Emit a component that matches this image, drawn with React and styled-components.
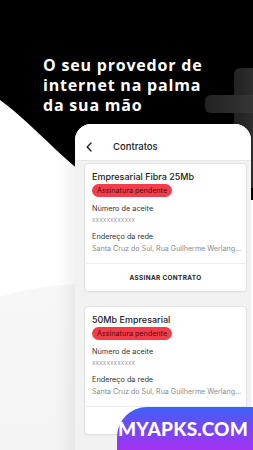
import React from "react";
import styled, { createGlobalStyle } from "styled-components";

const Global = createGlobalStyle`
  html, body { margin: 0; padding: 0; }
  body { width: 253px; height: 450px; overflow: hidden; background: #fff; }
  * { box-sizing: border-box; }
`;

const Screen = styled.div`
  position: relative;
  width: 253px;
  height: 450px;
  overflow: hidden;
  background: #ffffff;
`;

const Backdrop = styled.svg`
  position: absolute;
  inset: 0;
  width: 253px;
  height: 450px;
  z-index: 0;
`;

const Content = styled.div`
  position: relative;
  z-index: 1;
  display: flex;
  flex-direction: column;
`;

const Headline = styled.h1`
  margin: 0;
  padding: 55px 0 0 43px;
  font-family: "Open Sans", "DejaVu Sans", sans-serif;
  font-weight: 700;
  font-size: 16px;
  line-height: 20px;
  letter-spacing: 0.8px;
  color: #ffffff;
`;

const Phone = styled.div`
  margin: 9px 0 0 75px;
  width: 176px;
  height: 340px;
  border-radius: 16px 16px 0 0;
  background: #f2f2f2;
  overflow: hidden;
  box-shadow: -8px 6px 16px rgba(0, 0, 0, 0.06);
  font-family: Inter, "Liberation Sans", sans-serif;
`;

const PhoneHeader = styled.div`
  display: flex;
  align-items: center;
  height: 37px;
  padding: 9px 0 0 11px;
  background: #ffffff;
  border-bottom: 1px solid #e6e6e6;
`;

const BackIcon = styled.svg`
  width: 6px;
  height: 10px;
  flex: none;
`;

const HeaderTitle = styled.div`
  margin-left: 21px;
  font-size: 9.5px;
  font-weight: 500;
  color: #1c1c1c;
`;

const Body = styled.div`
  display: flex;
  flex-direction: column;
  gap: 14px;
  padding: 2px 4px 0 9px;
`;

const Card = styled.div`
  width: 163px;
  background: #ffffff;
  border: 1px solid #e3e3e3;
  border-radius: 4px;
  box-shadow: 0 1px 2px rgba(0, 0, 0, 0.04);
`;

const CardMain = styled.div`
  display: flex;
  flex-direction: column;
  align-items: flex-start;
  padding: 7px 7px 8px 7px;
`;

const Title = styled.div`
  font-size: 9px;
  line-height: 12px;
  font-weight: 500;
  color: #222;
`;

const Badge = styled.span`
  margin-top: 1px;
  height: 13px;
  padding: 0 5px;
  border-radius: 7px;
  background: #f23d4b;
  color: #5a0910;
  font-size: 7.2px;
  line-height: 13px;
`;

const Label = styled.div`
  margin-top: 6px;
  font-size: 7.3px;
  line-height: 12px;
  color: #333;
`;

const Value = styled.div`
  font-size: ${(p) => (p.$small ? "6.6px" : "7.1px")};
  line-height: ${(p) => (p.$small ? "10px" : "12px")};
  color: ${(p) => (p.$small ? "#a0a0a0" : "#8a8a8a")};
  white-space: nowrap;
`;

const Footer = styled.div`
  display: flex;
  align-items: center;
  justify-content: center;
  height: 28px;
  border-top: 1px solid #ececec;
  font-size: 6.4px;
  font-weight: 700;
  letter-spacing: 0.35px;
  color: #222;
`;

const Watermark = styled.div`
  position: absolute;
  z-index: 2;
  left: 117px;
  top: 407px;
  width: 136px;
  height: 43px;
  border-top-left-radius: 30px;
  background: linear-gradient(180deg, #3c62f7 0%, #7a45f2 55%, #a231f0 100%);
  display: flex;
  align-items: center;
  justify-content: flex-end;
  padding: 0 5px 0 0;
  font-family: Lato, "Open Sans", sans-serif;
  font-weight: 900;
  font-size: 19px;
  letter-spacing: 0.2px;
  color: #ffffff;
`;

const contracts = [
  { title: "Empresarial Fibra 25Mb" },
  { title: "50Mb Empresarial" },
];

function ContractCard({ title }) {
  return (
    <Card>
      <CardMain>
        <Title>{title}</Title>
        <Badge>Assinatura pendente</Badge>
        <Label>Número de aceite</Label>
        <Value $small>xxxxxxxxxxxx</Value>
        <Label>Endereço da rede</Label>
        <Value>Santa Cruz do Sul, Rua Guilherme Werlang...</Value>
      </CardMain>
      <Footer>ASSINAR CONTRATO</Footer>
    </Card>
  );
}

export default function App() {
  return (
    <>
      <Global />
      <Screen>
        <Backdrop viewBox="0 0 253 450">
          <defs>
            <linearGradient id="plus" x1="0" y1="0" x2="1" y2="0">
              <stop offset="0" stopColor="#222222" />
              <stop offset="1" stopColor="#3a3a3a" />
            </linearGradient>
            <linearGradient id="low" x1="0" y1="0" x2="0" y2="1">
              <stop offset="0" stopColor="#f7f7f7" />
              <stop offset="1" stopColor="#f4f4f4" />
            </linearGradient>
          </defs>
          <path d="M0,297 Q30,287 75,284 L75,450 L0,450 Z" fill="url(#low)" />
          <path d="M0,0 H253 V200 H120 C70,170 35,125 0,100 Z" fill="#000000" />
          <rect x="234" y="68" width="40" height="120" rx="6" fill="url(#plus)" />
          <rect x="205" y="95" width="60" height="18" rx="6" fill="url(#plus)" />
        </Backdrop>
        <Content>
          <Headline>
            O seu provedor de
            <br />
            internet na palma
            <br />
            da sua mão
          </Headline>
          <Phone>
            <PhoneHeader>
              <BackIcon viewBox="0 0 6 10">
                <path d="M5,1 L1.2,5 L5,9" fill="none" stroke="#1c1c1c" strokeWidth="1.3" strokeLinecap="round" strokeLinejoin="round" />
              </BackIcon>
              <HeaderTitle>Contratos</HeaderTitle>
            </PhoneHeader>
            <Body>
              {contracts.map((c) => (
                <ContractCard key={c.title} title={c.title} />
              ))}
            </Body>
          </Phone>
        </Content>
        <Watermark>MYAPKS.COM</Watermark>
      </Screen>
    </>
  );
}
